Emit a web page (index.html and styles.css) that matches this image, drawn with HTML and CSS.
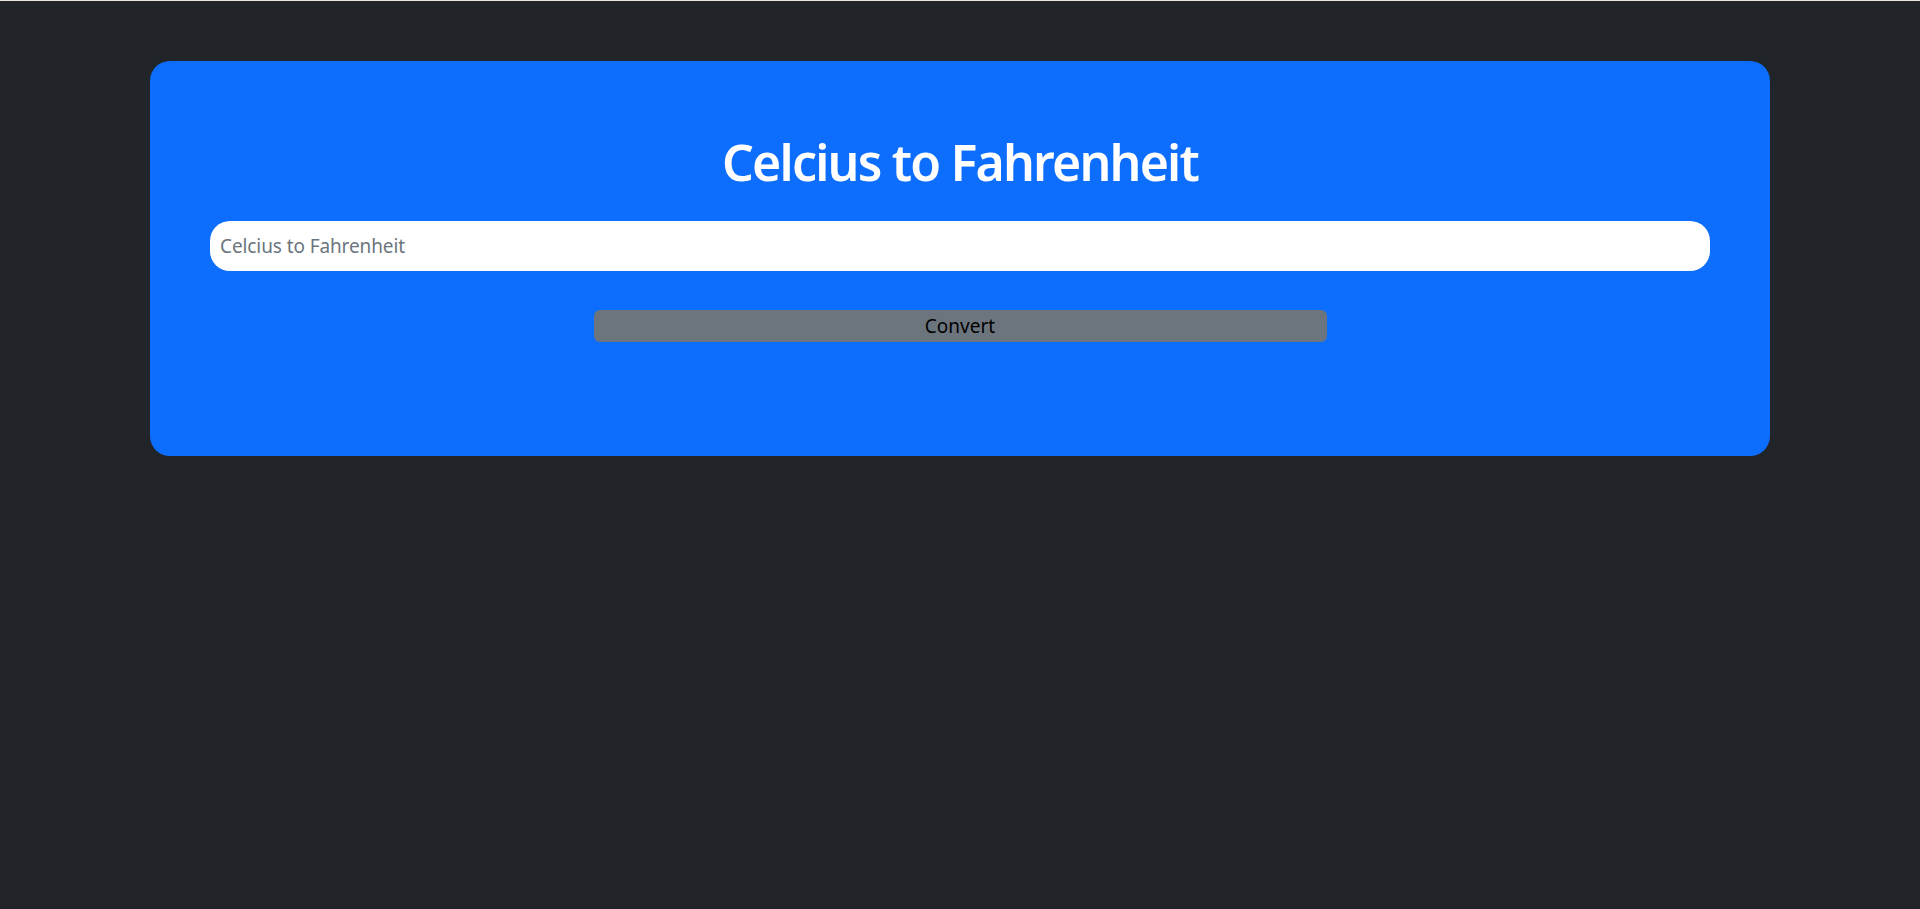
FILE: index.html
```html
<!DOCTYPE html>
<html lang="en">
<head>
<meta charset="utf-8">
<title>Celcius to Fahrenheit</title>
<link rel="stylesheet" href="styles.css">
</head>
<body>
<main class="page">
  <section class="card">
    <h1 class="title">Celcius to Fahrenheit</h1>
    <input class="field" type="text" placeholder="Celcius to Fahrenheit">
    <div class="actions">
      <button class="btn" type="button">Convert</button>
    </div>
  </section>
</main>
</body>
</html>
```
FILE: styles.css
```css
html, body {
  margin: 0;
  padding: 0;
}
body {
  background: #212529;
  border-top: 1px solid #ece8dc;
  min-height: 908px;
  font-family: "Noto Sans", "Open Sans", sans-serif;
}
.page {
  padding-top: 60px;
  display: flex;
  justify-content: center;
}
.card {
  box-sizing: border-box;
  width: 1620px;
  height: 395px;
  background: #0d6efd;
  border-radius: 20px;
  padding: 70px 60px 0;
  display: flex;
  flex-direction: column;
}
.title {
  margin: 0 0 28px;
  text-align: center;
  color: #fff;
  font-size: 50px;
  font-weight: 600;
  letter-spacing: -1.8px;
  line-height: 62px;
}
.field {
  box-sizing: border-box;
  width: 100%;
  height: 50px;
  border: 0;
  border-radius: 20px;
  background: #fff;
  padding: 0 10px;
  font-family: inherit;
  font-size: 19px;
  letter-spacing: -0.1px;
  color: #212529;
  outline: none;
}
.field::placeholder {
  color: #6c757d;
}
.actions {
  display: flex;
  justify-content: center;
  margin-top: 39px;
}
.btn {
  width: 733px;
  height: 32px;
  border: 0;
  border-radius: 6px;
  background: #6c757d;
  color: #000;
  font-family: inherit;
  font-size: 19px;
  padding: 0;
  line-height: 32px;
}
```
